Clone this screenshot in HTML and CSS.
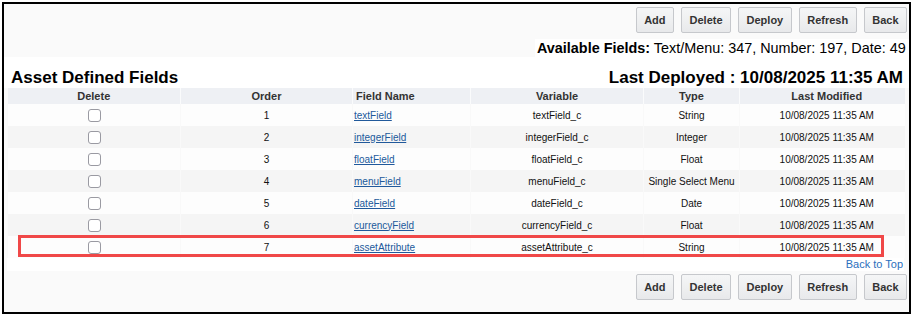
FILE: index.html
```html
<!DOCTYPE html>
<html lang="en">
<head>
  <meta charset="UTF-8" />
  <title>Asset Defined Fields</title>
  <link rel="stylesheet" href="styles.css">
</head>
<body>
  <div class="frame">
    <div class="toolbar">
      <button class="btn">Add</button>
      <button class="btn">Delete</button>
      <button class="btn">Deploy</button>
      <button class="btn">Refresh</button>
      <button class="btn">Back</button>
    </div>
    <div class="available">
      <span class="available-inner"><b>Available Fields:</b> Text/Menu: 347, Number: 197, Date: 49</span>
    </div>
    <div class="title-row">
      <h2>Asset Defined Fields</h2>
      <h2>Last Deployed : 10/08/2025 11:35 AM</h2>
    </div>
    <div class="table-wrap">
      <table class="fields">
        <thead>
          <tr>
            <th class="c-del">Delete</th>
            <th class="c-order">Order</th>
            <th class="c-name">Field Name</th>
            <th class="c-var">Variable</th>
            <th class="c-type">Type</th>
            <th class="c-mod">Last Modified</th>
          </tr>
        </thead>
        <tbody>
          <tr>
            <td><input type="checkbox" /></td>
            <td>1</td>
            <td class="c-name"><a href="#">textField</a></td>
            <td>textField_c</td>
            <td>String</td>
            <td class="c-mod">10/08/2025 11:35 AM</td>
          </tr>
          <tr>
            <td><input type="checkbox" /></td>
            <td>2</td>
            <td class="c-name"><a href="#">integerField</a></td>
            <td>integerField_c</td>
            <td>Integer</td>
            <td class="c-mod">10/08/2025 11:35 AM</td>
          </tr>
          <tr>
            <td><input type="checkbox" /></td>
            <td>3</td>
            <td class="c-name"><a href="#">floatField</a></td>
            <td>floatField_c</td>
            <td>Float</td>
            <td class="c-mod">10/08/2025 11:35 AM</td>
          </tr>
          <tr>
            <td><input type="checkbox" /></td>
            <td>4</td>
            <td class="c-name"><a href="#">menuField</a></td>
            <td>menuField_c</td>
            <td>Single Select Menu</td>
            <td class="c-mod">10/08/2025 11:35 AM</td>
          </tr>
          <tr>
            <td><input type="checkbox" /></td>
            <td>5</td>
            <td class="c-name"><a href="#">dateField</a></td>
            <td>dateField_c</td>
            <td>Date</td>
            <td class="c-mod">10/08/2025 11:35 AM</td>
          </tr>
          <tr>
            <td><input type="checkbox" /></td>
            <td>6</td>
            <td class="c-name"><a href="#">currencyField</a></td>
            <td>currencyField_c</td>
            <td>Float</td>
            <td class="c-mod">10/08/2025 11:35 AM</td>
          </tr>
          <tr>
            <td><input type="checkbox" /></td>
            <td>7</td>
            <td class="c-name"><a href="#">assetAttribute</a></td>
            <td>assetAttribute_c</td>
            <td>String</td>
            <td class="c-mod">10/08/2025 11:35 AM</td>
          </tr>
        </tbody>
      </table>
      <div class="highlight"></div>
      <div class="back-top"><a href="#">Back to Top</a></div>
    </div>
    <div class="toolbar bottom">
      <button class="btn">Add</button>
      <button class="btn">Delete</button>
      <button class="btn">Deploy</button>
      <button class="btn">Refresh</button>
      <button class="btn">Back</button>
    </div>
  </div>
</body>
</html>
```

FILE: styles.css
```css
* {
  box-sizing: border-box;
  margin: 0;
  padding: 0;
}
body {
  background-color: #fff;
  padding: 2px;
  font-family: 'Liberation Sans', Arial, sans-serif;
  color: #111;
}
.frame {
  width: 909px;
  height: 312px;
  border: 2px solid #000;
  background-color: #fafafa;
}
.toolbar {
  display: flex;
  justify-content: flex-end;
  gap: 7px;
  padding: 3px 2px 0 0;
}
.toolbar.bottom {
  padding-top: 3px;
}
.btn {
  height: 26px;
  padding: 0 7.5px;
  font-family: 'Liberation Sans', Arial, sans-serif;
  font-size: 11px;
  font-weight: bold;
  color: #333;
  background: linear-gradient(#f5f6f7, #e8e9eb);
  border: 1px solid #c6c8cc;
  border-radius: 2px;
  cursor: pointer;
}
.available {
  display: flex;
  justify-content: flex-end;
  margin-top: 6px;
}
.available-inner {
  display: block;
  background-color: #fff;
  padding: 0 1px 0 2px;
  width: 374px;
  font-size: 14.4px;
  line-height: 18px;
  color: #000;
  white-space: nowrap;
}
.title-row {
  display: flex;
  justify-content: space-between;
  align-items: flex-end;
  height: 31px;
  padding: 0 6px 1px 7px;
  background-color: #fff;
}
.title-row h2 {
  font-size: 17px;
  line-height: 19px;
  color: #000;
}
.table-wrap {
  position: relative;
  margin-left: 3px;
  width: 897px;
}
.fields {
  width: 897px;
  border-collapse: collapse;
  table-layout: fixed;
  font-size: 10px;
  color: #111;
}
.fields th {
  height: 16px;
  font-size: 11px;
  font-weight: bold;
  color: #333;
  background-color: #eef0f4;
  border-left: 1px solid #fafbfc;
  text-align: center;
}
.fields th:first-child {
  border-left: none;
}
.fields td {
  height: 22px;
  text-align: center;
  border-left: 1px solid #f9f9f9;
}
.fields tbody tr:nth-child(odd) td {
  background-color: #fdfdfd;
}
.fields tbody tr:nth-child(even) td {
  background-color: #f5f5f5;
}
.c-del { width: 173px; }
.c-order { width: 172px; }
.fields .c-name {
  width: 118px;
  text-align: left;
}
.fields th.c-name {
  padding-left: 3px;
}
.fields td.c-name {
  padding-left: 1px;
}
.c-var { width: 173px; }
.c-type { width: 96px; }
.fields .c-mod {
  width: 165px;
  padding-left: 9px;
}
.fields a {
  color: #21599b;
  text-decoration: underline;
}
.fields input[type="checkbox"] {
  appearance: none;
  display: block;
  margin: 0 auto;
  width: 13px;
  height: 13px;
  border: 1px solid #9a9aa2;
  border-radius: 3px;
  background-color: #fff;
}
.highlight {
  position: absolute;
  left: 11px;
  top: 147px;
  width: 866px;
  height: 22px;
  border: 3px solid #f04848;
}
.back-top {
  height: 13px;
  background-color: #fff;
  text-align: right;
  font-size: 11px;
  line-height: 13px;
  padding-right: 1px;
}
.back-top a {
  color: #2a6fbd;
  text-decoration: none;
}
```
